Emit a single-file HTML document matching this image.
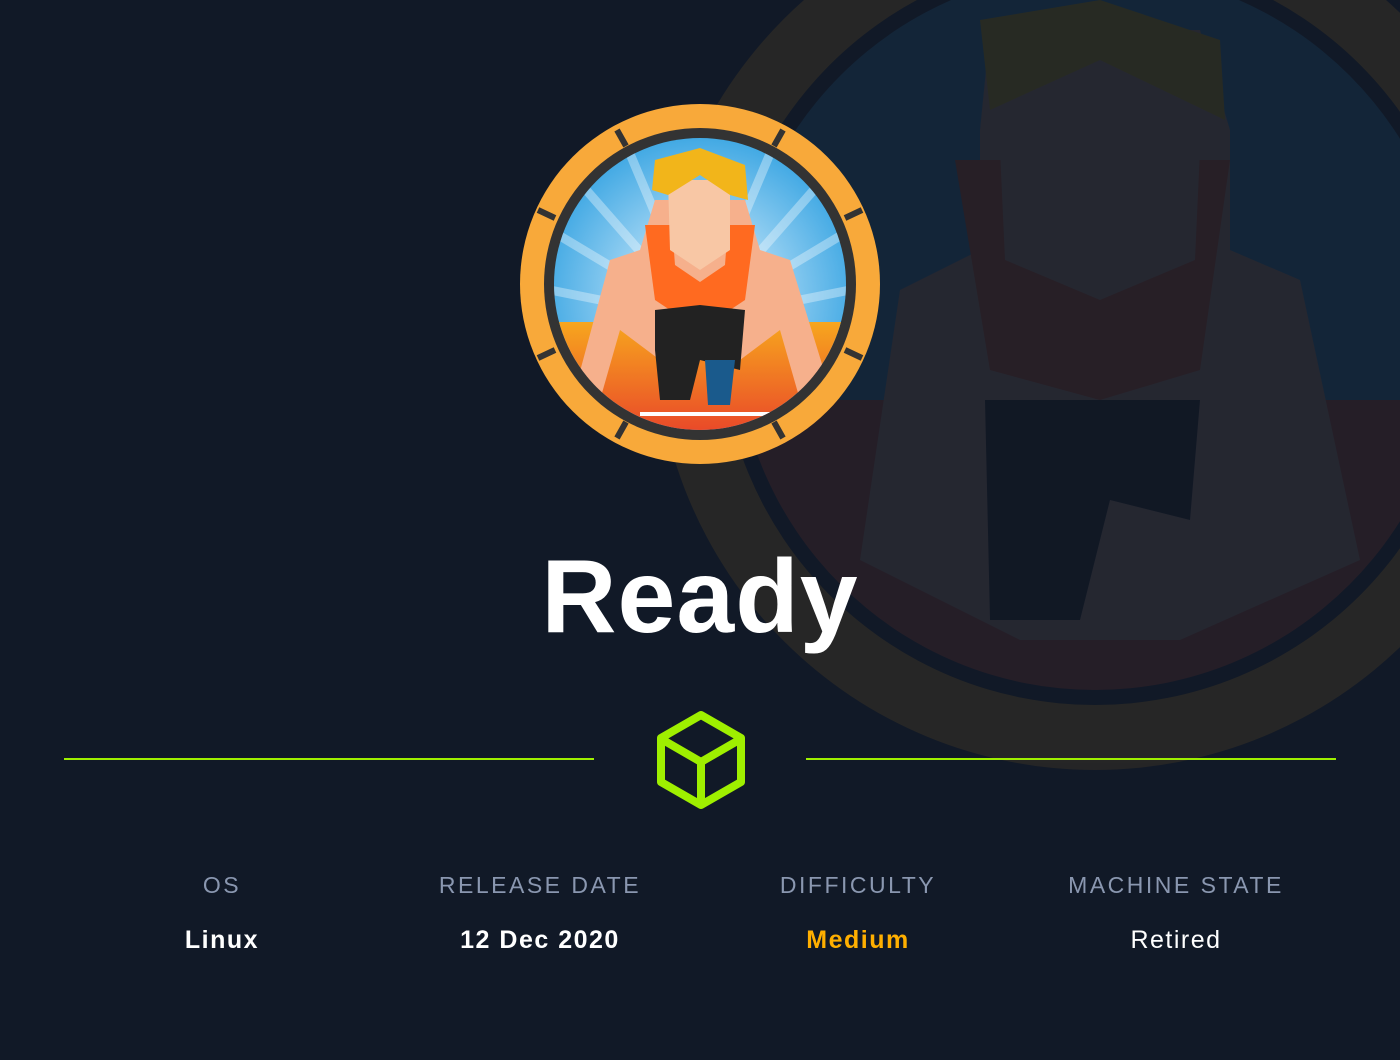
<!DOCTYPE html>
<html><head><meta charset="utf-8"><style>
html,body{margin:0;padding:0;background:#111927;width:1400px;height:1060px;overflow:hidden;font-family:"Liberation Sans",sans-serif;position:relative}
.t{position:absolute;text-align:center;width:320px}
.l{top:872px;color:#8a97b0;font-size:23px;letter-spacing:2.5px}
.v{top:926px;color:#fff;font-size:25px;letter-spacing:1.5px}
</style></head><body>
<svg width="1400" height="1060" style="position:absolute;left:0;top:0">
<defs>
<radialGradient id="sky" cx="50%" cy="55%" r="60%"><stop offset="0" stop-color="#e8f6ff"/><stop offset="1" stop-color="#2a9ee0"/></radialGradient>
<linearGradient id="trk" x1="0" y1="0" x2="0" y2="1"><stop offset="0" stop-color="#f7a61e"/><stop offset="1" stop-color="#e8402a"/></linearGradient>
<clipPath id="ic"><circle cx="700" cy="284" r="146"/></clipPath>
<clipPath id="bc"><circle cx="1095" cy="330" r="360"/></clipPath>
</defs>
<g opacity="0.09">
<circle cx="1095" cy="330" r="440" fill="#f7a61e"/>
<circle cx="1095" cy="330" r="375" fill="#111927"/>
<g clip-path="url(#bc)">
<rect x="700" y="0" width="800" height="400" fill="#2a9ee0"/>
<rect x="700" y="400" width="800" height="300" fill="#e8502a"/>
<path d="M990 30 L1200 30 L1230 130 L1230 250 L1300 280 L1360 560 L1180 640 L1020 640 L860 560 L900 290 L980 250 L980 130Z" fill="#f0b090"/>
<path d="M980 20 L1100 0 L1220 40 L1225 120 L1100 60 L990 110Z" fill="#ffd400"/>
<path d="M955 160 L1230 160 L1200 370 L1100 400 L990 370Z" fill="#ff5a20"/>
<path d="M1000 150 L1200 150 L1195 260 L1100 300 L1005 260Z" fill="#f0b090"/>
<path d="M985 400 L1200 400 L1190 520 L1110 500 L1080 620 L990 620Z" fill="#111"/>
</g>
</g>
<circle cx="700" cy="284" r="180" fill="#f8a93a"/>
<circle cx="700" cy="284" r="156" fill="#333"/>
<g clip-path="url(#ic)">
<rect x="550" y="130" width="300" height="300" fill="url(#sky)"/>
<g stroke="#fff" stroke-opacity="0.35" stroke-width="9">
<line x1="700" y1="320" x2="560" y2="160"/><line x1="700" y1="320" x2="840" y2="160"/>
<line x1="700" y1="320" x2="550" y2="230"/><line x1="700" y1="320" x2="850" y2="230"/>
<line x1="700" y1="320" x2="550" y2="290"/><line x1="700" y1="320" x2="850" y2="290"/>
<line x1="700" y1="320" x2="620" y2="130"/><line x1="700" y1="320" x2="780" y2="130"/>
</g>
<rect x="550" y="322" width="300" height="120" fill="url(#trk)"/>
<path d="M655 200 L745 200 L760 250 L790 260 L830 390 L800 400 L780 330 L740 360 L700 330 L660 360 L620 330 L600 400 L575 390 L610 260 L640 250Z" fill="#f6b08c"/>
<path d="M645 225 L755 225 L745 300 L700 330 L655 300Z" fill="#ff6a20"/>
<path d="M672 225 L728 225 L725 265 L700 282 L675 265Z" fill="#f6b08c"/>
<path d="M668 180 L730 180 L730 250 L700 270 L670 250Z" fill="#f8c7a5"/>
<path d="M655 160 L700 148 L745 165 L748 200 L730 195 L700 175 L668 195 L652 190Z" fill="#f2b51a"/>
<path d="M655 310 L700 305 L745 310 L740 370 L700 360 L690 400 L660 400 L655 350Z" fill="#222"/>
<path d="M705 360 L735 360 L730 405 L708 405Z" fill="#1a5a8c"/>
<rect x="640" y="412" width="130" height="4" fill="#fff"/>
</g>
<g stroke="#333" stroke-width="6">
<line x1="617" y1="130" x2="626" y2="146"/><line x1="783" y1="130" x2="774" y2="146"/>
<line x1="538" y1="210" x2="555" y2="218"/><line x1="862" y1="210" x2="845" y2="218"/>
<line x1="538" y1="358" x2="555" y2="350"/><line x1="862" y1="358" x2="845" y2="350"/>
<line x1="617" y1="438" x2="626" y2="422"/><line x1="783" y1="438" x2="774" y2="422"/>
</g>
<line x1="64" y1="759" x2="594" y2="759" stroke="#9fef00" stroke-width="2"/>
<line x1="806" y1="759" x2="1336" y2="759" stroke="#9fef00" stroke-width="2"/>
<g fill="none" stroke="#9fef00" stroke-width="8" stroke-linejoin="round">
<path d="M701 715 L741 738 L741 782 L701 805 L661 782 L661 738Z"/>
<path d="M663 740 L701 762 L739 740 M701 762 L701 803"/>
</g>
</svg>
<div style="position:absolute;left:0;width:1400px;top:538px;text-align:center;color:#fff;font-size:104px;font-weight:bold;letter-spacing:1px">Ready</div>
<div class="t l" style="left:62px">OS</div>
<div class="t l" style="left:380px">RELEASE DATE</div>
<div class="t l" style="left:698px">DIFFICULTY</div>
<div class="t l" style="left:1016px">MACHINE STATE</div>
<div class="t v" style="left:62px;font-weight:bold">Linux</div>
<div class="t v" style="left:380px;font-weight:bold">12 Dec 2020</div>
<div class="t v" style="left:698px;font-weight:bold;color:#ffaf00">Medium</div>
<div class="t v" style="left:1016px">Retired</div>
</body></html>
